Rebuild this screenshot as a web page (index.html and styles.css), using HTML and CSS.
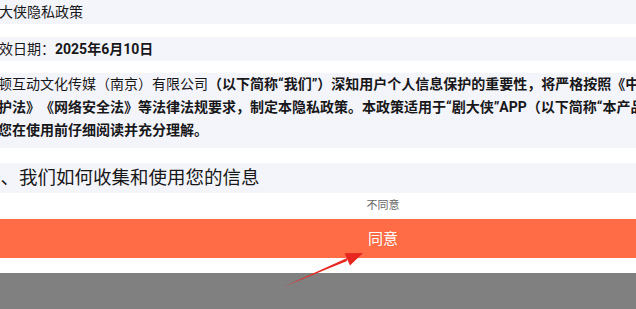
FILE: index.html
```html
<!DOCTYPE html>
<html>
<head>
<title>剧大侠隐私政策</title>
<link rel="stylesheet" href="styles.css">
</head>
<body>
<div class="page">
    <div class="band title">剧大侠隐私政策</div>
    <div class="band date">生效日期：<b>2025年6月10日</b></div>
    <div class="band intro">
        <p>顿互动文化传媒（南京）有限公司<b>（以下简称“我们”）深知用户个人信息保护的重要性，将严格按照《中华人民共和国个人信息保<br>护法》《网络安全法》等法律法规要求，制定本隐私政策。本政策适用于“剧大侠”APP（以下简称“本产品”或“本应用”），请<br>您在使用前仔细阅读并充分理解。</b></p>
    </div>
    <div class="band section">一、我们如何收集和使用您的信息</div>

    <div class="consent">
        <div class="decline">不同意</div>
        <div class="agree">同意</div>
    </div>
</div>
<div class="nav-bar"></div>

<svg class="arrow" width="636" height="309" viewBox="0 0 636 309">
    <polygon points="283,287 346.4,261.2 348.2,257.4" fill="#e8261f"/>
    <polygon points="363,253 350,265.5 344.6,253.3" fill="#e8261f"/>
</svg>
</body>
</html>
```

FILE: styles.css
```css
body {
    margin: 0;
    overflow: hidden;
    background: #ffffff;
    font-family: Roboto, "Noto Sans CJK SC", sans-serif;
    color: #18181a;
    text-spacing-trim: space-all;
}

.page {
    width: 828px;
    margin-left: -31px;
}

.band {
    background: #f4f5fa;
    padding: 0 16px;
    font-size: 14px;
}

.title {
    height: 24px;
    line-height: 24px;
    margin-bottom: 13px;
}

.date {
    height: 24px;
    line-height: 24px;
    margin-bottom: 12px;
}

.intro {
    padding-left: 29px;
    padding-bottom: 6px;
    margin-bottom: 15px;
}

.intro p {
    margin: 0;
    line-height: 23px;
    white-space: nowrap;
}

.section {
    height: 30px;
    line-height: 30px;
    font-size: 18.5px;
    padding-left: 13px;
}

.consent {
    text-align: center;
}

.decline {
    height: 26px;
    line-height: 26px;
    font-size: 11px;
    color: #666666;
}

.agree {
    height: 39px;
    line-height: 41px;
    background: #ff6c45;
    color: #ffffff;
    font-size: 15px;
    margin-bottom: 15px;
}

.nav-bar {
    height: 40px;
    background: #808080;
}

.arrow {
    position: absolute;
    left: 0;
    top: 0;
}
```
